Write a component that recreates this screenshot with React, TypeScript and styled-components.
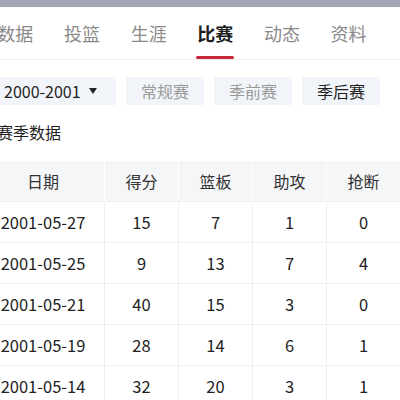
import styled, { createGlobalStyle } from 'styled-components';

const GlobalStyle = createGlobalStyle`
  html, body {
    margin: 0;
    padding: 0;
    background: #ffffff;
    overflow: hidden;
  }
  body {
    font-family: "Noto Sans CJK SC", "Noto Sans", sans-serif;
    color: #222;
  }
`;

const tabs = ['数据', '投篮', '生涯', '比赛', '动态', '资料'];
const types = ['常规赛', '季前赛', '季后赛'];
const headers = ['日期', '得分', '篮板', '助攻', '抢断'];

const rows = [
  ['2001-05-27', '15', '7', '1', '0'],
  ['2001-05-25', '9', '13', '7', '4'],
  ['2001-05-21', '40', '15', '3', '0'],
  ['2001-05-19', '28', '14', '6', '1'],
  ['2001-05-14', '32', '20', '3', '1'],
];

const Page = styled.div`
  width: 420px;
  margin-left: -18px;
`;

const StatusStrip = styled.div`
  height: 7px;
  background: #a2a6b6;
`;

const TabBar = styled.nav`
  display: flex;
  border-bottom: 1px solid #eeeeee;
`;

const Tab = styled.div<{ $active?: boolean }>`
  flex: 0 0 66.67px;
  height: 52px;
  display: flex;
  align-items: center;
  justify-content: center;
  position: relative;
  font-size: 18px;
  font-weight: ${(p) => (p.$active ? 700 : 400)};
  color: ${(p) => (p.$active ? '#1e1e1e' : '#8a8a8a')};

  &::after {
    content: '';
    display: ${(p) => (p.$active ? 'block' : 'none')};
    position: absolute;
    bottom: 0;
    left: 50%;
    width: 38px;
    height: 3px;
    margin-left: -19px;
    border-radius: 2px;
    background: #c8273a;
  }
`;

const FilterRow = styled.div`
  display: flex;
  gap: 10px;
  padding-left: 6px;
  margin-top: 17px;
`;

const SeasonButton = styled.div`
  width: 128px;
  height: 28px;
  box-sizing: border-box;
  padding-left: 16px;
  display: flex;
  align-items: center;
  gap: 8px;
  background: #f1f4f9;
  font-size: 16px;
  color: #1e1e1e;
`;

const Caret = styled.span`
  width: 0;
  height: 0;
  border-left: 4px solid transparent;
  border-right: 4px solid transparent;
  border-top: 6px solid #222;
`;

const TypeButton = styled.div<{ $active?: boolean }>`
  width: 78px;
  height: 28px;
  display: flex;
  align-items: center;
  justify-content: center;
  background: #f1f4f9;
  font-size: 16px;
  color: ${(p) => (p.$active ? '#1e1e1e' : '#9a9a9a')};
`;

const SectionTitle = styled.div`
  margin-top: 15px;
  padding-left: 15px;
  font-size: 16px;
  line-height: 24px;
  color: #1e1e1e;
`;

const Table = styled.div`
  margin-top: 17px;
  display: grid;
  grid-template-columns: 123px repeat(4, 74px);
`;

const HeadCell = styled.div`
  height: 40px;
  display: flex;
  align-items: center;
  justify-content: center;
  background: #f5f6f8;
  border-right: 1px solid #ffffff;
  font-size: 16px;
  color: #333;
`;

const Cell = styled.div`
  height: 41px;
  box-sizing: border-box;
  display: flex;
  align-items: center;
  justify-content: center;
  border-top: 1px solid #efefef;
  border-right: 1px solid #efefef;
  font-size: 16.5px;
  color: #222;
`;

export default function App() {
  return (
    <>
      <GlobalStyle />
      <Page>
        <StatusStrip />
        <TabBar>
          {tabs.map((t) => (
            <Tab key={t} $active={t === '比赛'}>
              {t}
            </Tab>
          ))}
        </TabBar>
        <FilterRow>
          <SeasonButton>
            2000-2001
            <Caret />
          </SeasonButton>
          {types.map((t) => (
            <TypeButton key={t} $active={t === '季后赛'}>
              {t}
            </TypeButton>
          ))}
        </FilterRow>
        <SectionTitle>赛季数据</SectionTitle>
        <Table>
          {headers.map((h) => (
            <HeadCell key={h}>{h}</HeadCell>
          ))}
          {rows.map((r) =>
            r.map((v, i) => <Cell key={r[0] + i}>{v}</Cell>)
          )}
        </Table>
      </Page>
    </>
  );
}
